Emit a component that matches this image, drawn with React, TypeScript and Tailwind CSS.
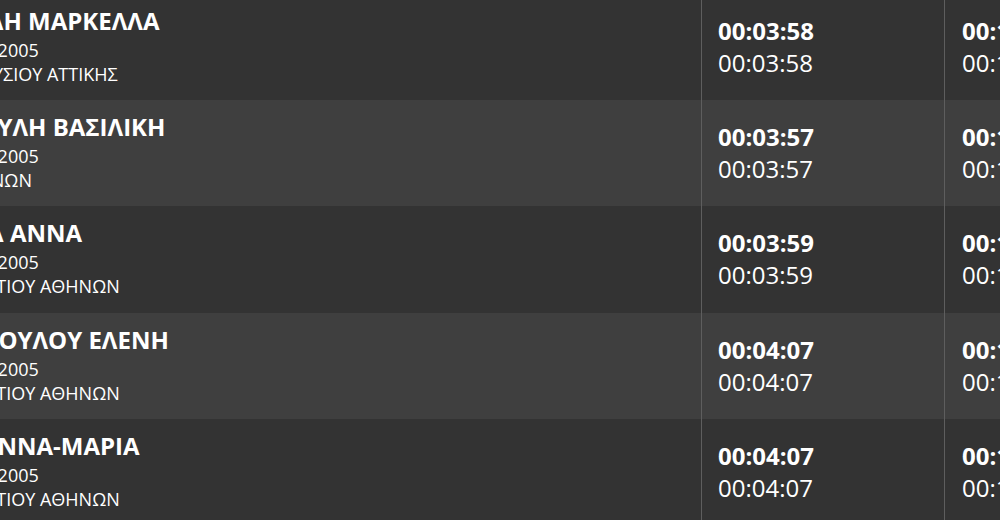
import React from "react";

const results = [
    { name: "ΧΑΤΖΗΜΙΧΑΛΗ ΜΑΡΚΕΛΛΑ", born: "2005", club: "ΚΟΛΥΜΒ. ΑΜΑΡΟΥΣΙΟΥ ΑΤΤΙΚΗΣ", time: "00:03:58", total: "00:12:31" },
    { name: "ΚΩΝΣΤΑΝΤΟΥΛΗ ΒΑΣΙΛΙΚΗ", born: "2005", club: "ΚΟΛΥΜΒ. Ν. ΑΘΗΝΩΝ", time: "00:03:57", total: "00:12:34" },
    { name: "ΚΑΡΑΓΙΑΝΝΑ ΑΝΝΑ", born: "2005", club: "ΚΟΛΥΜΒ. ΠΑΓΚΡΑΤΙΟΥ ΑΘΗΝΩΝ", time: "00:03:59", total: "00:12:40" },
    { name: "ΧΡΥΣΑΝΘΟΠΟΥΛΟΥ ΕΛΕΝΗ", born: "2005", club: "ΚΟΛΥΜΒ. ΠΑΓΚΡΑΤΙΟΥ ΑΘΗΝΩΝ", time: "00:04:07", total: "00:12:52" },
    { name: "ΝΙΚΟΛΑΟΥ ΑΝΝΑ-ΜΑΡΙΑ", born: "2005", club: "ΚΟΛΥΜΒ. ΠΑΓΚΡΑΤΙΟΥ ΑΘΗΝΩΝ", time: "00:04:07", total: "00:12:58" },
];

export default function App() {
    return (
        <div className="w-[1000px] h-[520px] overflow-hidden bg-[#333333] text-white font-['Open_Sans',sans-serif]">
            <div className="-mt-[6.3px]">
                {results.map((r, i) => (
                    <div key={i} className={`flex h-[106.3px] ${i % 2 ? "bg-[#3f3f3f]" : "bg-[#333333]"}`}>
                        <div className="w-[702px] shrink-0 overflow-hidden border-r border-[#5e5e5e]">
                            <div className="-ml-[154px] pt-[10px] whitespace-nowrap">
                                <div className="text-[24px] font-bold leading-[34px]">{r.name}</div>
                                <div className="text-[18px] leading-6">ΕΤΟΣ ΓΕΝΝΗΣΗΣ: {r.born}</div>
                                <div className="text-[18px] leading-6">{r.club}</div>
                            </div>
                        </div>
                        <div className="w-[243px] shrink-0 border-r border-[#5e5e5e] pl-4 pt-[21px] text-[24px] leading-8">
                            <p className="font-bold">{r.time}</p>
                            <p>{r.time}</p>
                        </div>
                        <div className="pl-[17px] pt-[21px] text-[24px] leading-8 whitespace-nowrap">
                            <p className="font-bold">{r.total}</p>
                            <p>{r.total}</p>
                        </div>
                    </div>
                ))}
            </div>
        </div>
    );
}
